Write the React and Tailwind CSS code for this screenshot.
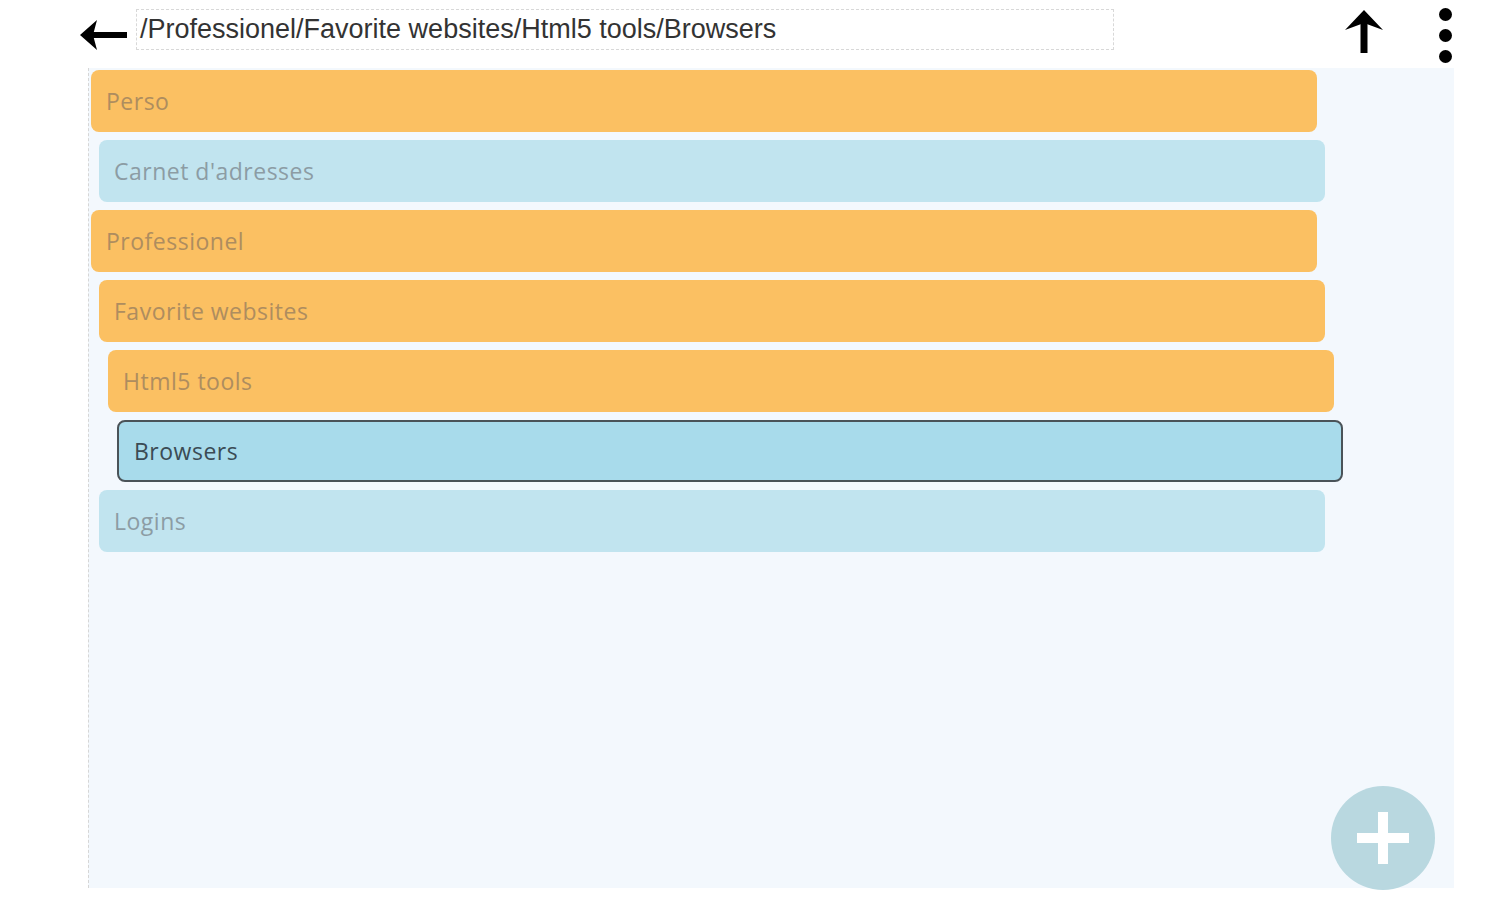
import React from 'react';

const rows = [
  { label: 'Perso', indent: 'ml-[2px]', tone: 'orange' },
  { label: "Carnet d'adresses", indent: 'ml-[10px]', tone: 'blue' },
  { label: 'Professionel', indent: 'ml-[2px]', tone: 'orange' },
  { label: 'Favorite websites', indent: 'ml-[10px]', tone: 'orange' },
  { label: 'Html5 tools', indent: 'ml-[19px]', tone: 'orange' },
  { label: 'Browsers', indent: 'ml-[28px]', tone: 'active' },
  { label: 'Logins', indent: 'ml-[10px]', tone: 'blue' },
];

const toneClass = {
  orange: 'bg-[#fbc062] text-[#ae8d5f] pl-[15px]',
  blue: 'bg-[#c1e4ef] text-[#8c9ca4] pl-[15px]',
  active: 'bg-[#a8dbeb] text-[#3b4b55] border-2 border-[#4a5358] pl-[15px]',
};

export default function App() {
  return (
    <div className="w-[1501px] h-[900px] bg-white relative" style={{ fontFamily: '"Liberation Sans", Arial, sans-serif' }}>
      {/* top bar */}
      <div className="flex items-center h-[68px]">
        <svg className="ml-[79px] mt-[2px]" width="50" height="36" viewBox="0 0 50 36">
          <path d="M48 18H12" stroke="#000" strokeWidth="6" />
          <path d="M1 18L18 3L14 18L18 33Z" fill="#000" />
        </svg>
        <div className="ml-[7px] mb-[10px] w-[978px] h-[41px] border border-dashed border-[#d8d8d8] flex items-center px-[3px] text-[27px] text-[#333]">
          /Professionel/Favorite websites/Html5 tools/Browsers
        </div>
        <svg className="ml-[230px] mb-[4px]" width="40" height="46" viewBox="0 0 40 46">
          <path d="M20 44V14" stroke="#000" strokeWidth="7" />
          <path d="M20 1L39 21L20 14L1 21Z" fill="#000" />
        </svg>
        <div className="ml-[55px] mt-[2px] flex flex-col gap-[8px]">
          <div className="w-[13px] h-[13px] rounded-full bg-black" />
          <div className="w-[13px] h-[13px] rounded-full bg-black" />
          <div className="w-[13px] h-[13px] rounded-full bg-black" />
        </div>
      </div>

      {/* list panel */}
      <div className="ml-[88px] w-[1366px] h-[820px] bg-[#f3f8fd] border-l border-dashed border-[#d6d6d6] pt-[2px] flex flex-col gap-[8px]">
        {rows.map((r) => (
          <div
            key={r.label}
            className={`${r.indent} w-[1226px] h-[62px] rounded-[8px] flex items-center text-[23px] tracking-[0.5px] ${toneClass[r.tone]}`}
            style={{ fontFamily: '"Open Sans", "Liberation Sans", sans-serif' }}
          >
            {r.label}
          </div>
        ))}
      </div>

      {/* floating add button */}
      <div className="absolute left-[1331px] top-[786px] w-[104px] h-[104px] rounded-full bg-[#b9d8e0] flex items-center justify-center">
        <svg width="58" height="58" viewBox="0 0 58 58">
          <path d="M29 3V55M3 29H55" stroke="#fff" strokeWidth="10" />
        </svg>
      </div>
    </div>
  );
}
